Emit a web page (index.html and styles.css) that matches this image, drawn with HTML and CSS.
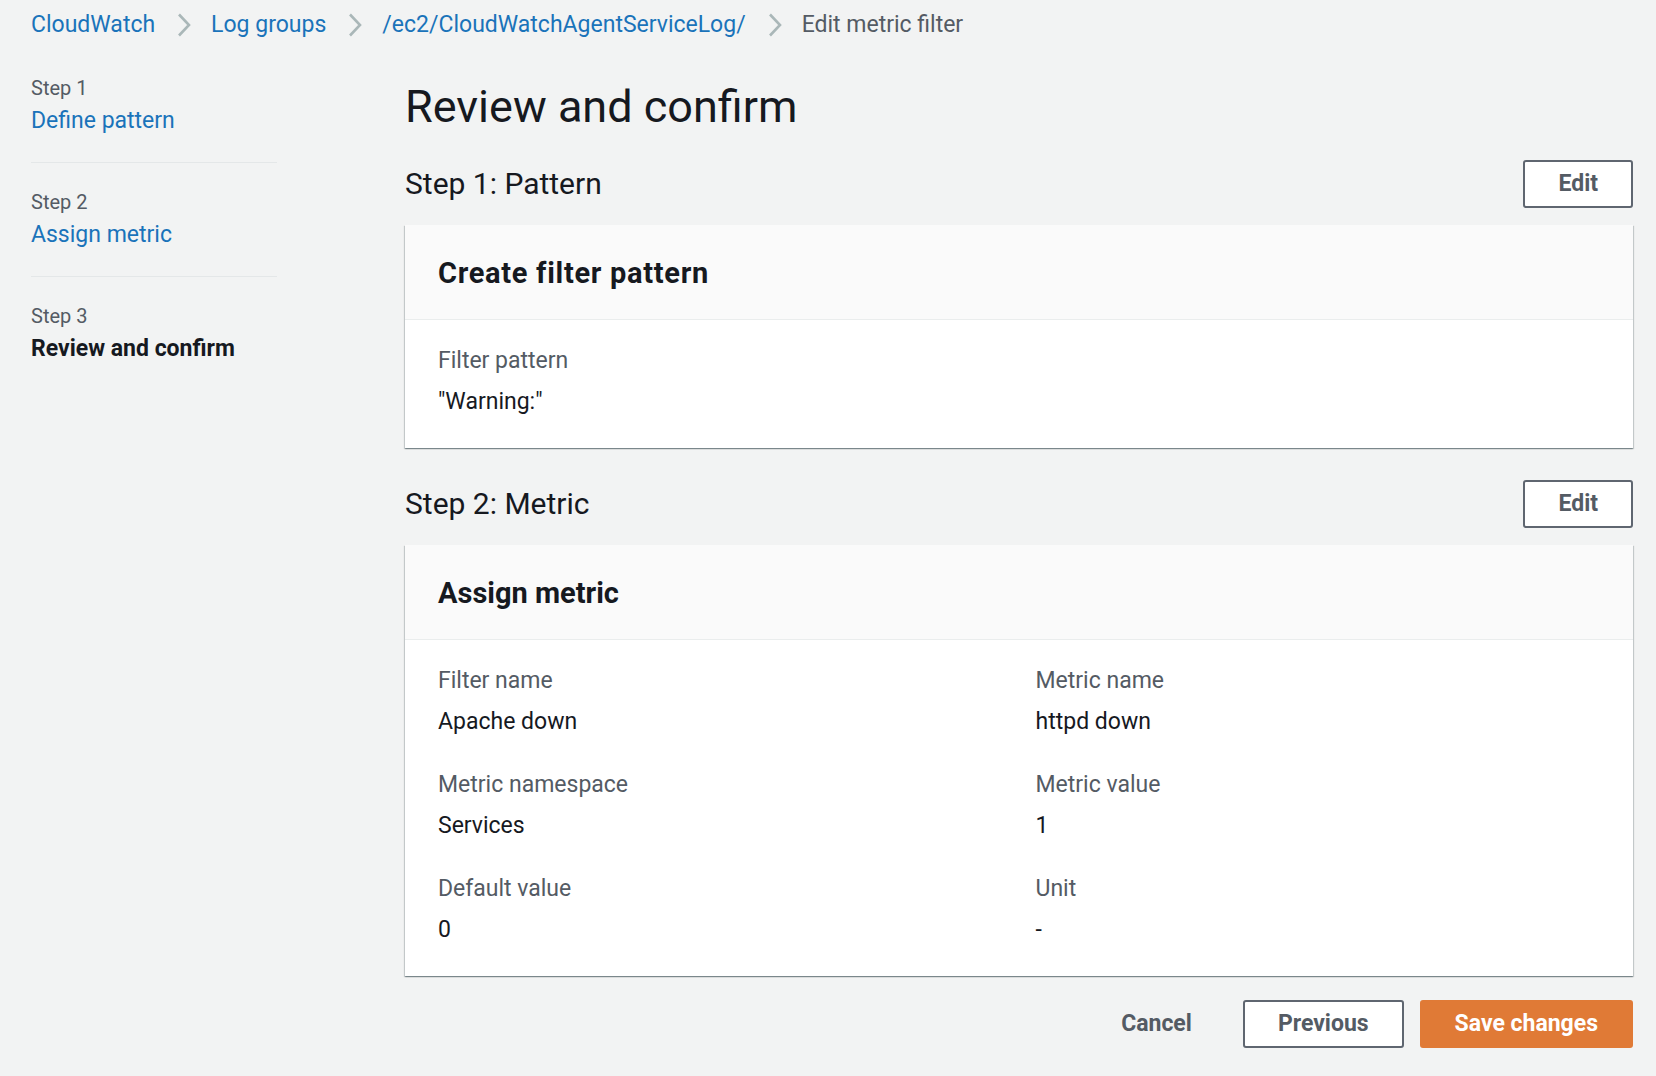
FILE: index.html
```html
<!DOCTYPE html>
<html lang="en">
<head>
<meta charset="utf-8">
<title>Edit metric filter</title>
<link rel="stylesheet" href="styles.css">
</head>
<body>
<nav class="breadcrumbs">
  <a class="crumb" href="#">CloudWatch</a>
  <svg class="chev" viewBox="0 0 14 24" width="14" height="24"><path d="M2 1.5 L12 12 L2 22.5" fill="none" stroke="#aab7b8" stroke-width="2.6"/></svg>
  <a class="crumb" href="#">Log groups</a>
  <svg class="chev" viewBox="0 0 14 24" width="14" height="24"><path d="M2 1.5 L12 12 L2 22.5" fill="none" stroke="#aab7b8" stroke-width="2.6"/></svg>
  <a class="crumb" href="#">/ec2/CloudWatchAgentServiceLog/</a>
  <svg class="chev" viewBox="0 0 14 24" width="14" height="24"><path d="M2 1.5 L12 12 L2 22.5" fill="none" stroke="#aab7b8" stroke-width="2.6"/></svg>
  <span class="crumb current">Edit metric filter</span>
</nav>

<div class="layout">
  <aside class="wizard-nav">
    <ol class="steps">
      <li class="step">
        <div class="step-label">Step 1</div>
        <a class="step-link" href="#">Define pattern</a>
      </li>
      <li class="step">
        <div class="step-label">Step 2</div>
        <a class="step-link" href="#">Assign metric</a>
      </li>
      <li class="step">
        <div class="step-label">Step 3</div>
        <span class="step-link active">Review and confirm</span>
      </li>
    </ol>
  </aside>

  <main class="content">
    <h1 class="page-title">Review and confirm</h1>

    <section class="review-section">
      <div class="section-head">
        <h2 class="section-title">Step 1: Pattern</h2>
        <button class="btn">Edit</button>
      </div>
      <div class="container">
        <div class="container-header">
          <h3 class="container-title wide">Create filter pattern</h3>
        </div>
        <div class="container-body">
          <div class="field">
            <div class="field-label">Filter pattern</div>
            <div class="field-value">"Warning:"</div>
          </div>
        </div>
      </div>
    </section>

    <section class="review-section second">
      <div class="section-head">
        <h2 class="section-title">Step 2: Metric</h2>
        <button class="btn">Edit</button>
      </div>
      <div class="container">
        <div class="container-header">
          <h3 class="container-title">Assign metric</h3>
        </div>
        <div class="container-body grid">
          <div class="field">
            <div class="field-label">Filter name</div>
            <div class="field-value">Apache down</div>
          </div>
          <div class="field">
            <div class="field-label">Metric name</div>
            <div class="field-value">httpd down</div>
          </div>
          <div class="field">
            <div class="field-label">Metric namespace</div>
            <div class="field-value">Services</div>
          </div>
          <div class="field">
            <div class="field-label">Metric value</div>
            <div class="field-value">1</div>
          </div>
          <div class="field">
            <div class="field-label">Default value</div>
            <div class="field-value">0</div>
          </div>
          <div class="field">
            <div class="field-label">Unit</div>
            <div class="field-value">-</div>
          </div>
        </div>
      </div>
    </section>

    <div class="actions">
      <button class="btn link">Cancel</button>
      <button class="btn">Previous</button>
      <button class="btn primary">Save changes</button>
    </div>
  </main>
</div>
</body>
</html>
```

FILE: styles.css
```css
* { box-sizing: border-box; }

body {
  margin: 0;
  background: #f2f3f3;
  color: #16191f;
  font-family: Roboto, "Noto Sans", Arial, sans-serif;
  font-size: 23px;
  line-height: 30px;
}

a { text-decoration: none; }

.breadcrumbs {
  display: flex;
  align-items: center;
  padding: 10px 0 0 31px;
  height: 40px;
}

.crumb {
  color: #1a73ba;
  font-size: 23px;
  line-height: 30px;
}

.crumb.current { color: #545b64; }

.chev {
  display: block;
  margin: 0 20px 0 22px;
}

.layout {
  display: flex;
  margin-top: 35px;
  padding: 0 23px 0 31px;
}

.wizard-nav {
  width: 246px;
  flex: none;
  margin-right: 128px;
}

.steps {
  list-style: none;
  margin: 0;
  padding: 0;
}

.step {
  padding-bottom: 26px;
  border-bottom: 1px solid #e4e7e8;
  margin-bottom: 26px;
}

.step:last-child {
  border-bottom: none;
}

.step-label {
  font-size: 20px;
  line-height: 26px;
  color: #545b64;
}

.step-link {
  display: block;
  margin-top: 5px;
  font-size: 23px;
  line-height: 30px;
  color: #1a73ba;
}

.step-link.active {
  color: #16191f;
  font-weight: 700;
}

.content {
  flex: 1;
  min-width: 0;
}

.page-title {
  margin: 4px 0 0;
  font-size: 45px;
  line-height: 56px;
  font-weight: 400;
  color: #16191f;
}

.review-section {
  margin-top: 25px;
}

.review-section.second {
  margin-top: 32px;
}

.section-head {
  display: flex;
  align-items: center;
  justify-content: space-between;
  height: 48px;
}

.section-title {
  margin: 0;
  font-size: 30px;
  line-height: 36px;
  font-weight: 400;
}

.btn {
  font-family: inherit;
  font-size: 23px;
  line-height: 30px;
  font-weight: 700;
  color: #545b64;
  background: #fff;
  border: 2px solid #5f6670;
  border-radius: 3px;
  padding: 7px 33px;
  height: 48px;
  cursor: pointer;
}

.btn.link {
  background: transparent;
  border-color: transparent;
}

.btn.primary {
  background: #e07a36;
  border-color: #e07a36;
  color: #fff;
}

.container {
  margin-top: 17px;
  background: #fff;
  box-shadow: 0 1px 1px 0 rgba(0, 28, 36, 0.3), 1px 1px 1px 0 rgba(0, 28, 36, 0.15), -1px 1px 1px 0 rgba(0, 28, 36, 0.15);
}

.container-header {
  background: #fafafa;
  border-bottom: 1px solid #eaeded;
  padding: 30px 33px 28px;
}

.container-title {
  margin: 0;
  font-size: 29px;
  line-height: 36px;
  font-weight: 700;
}

.container-title.wide {
  letter-spacing: 0.7px;
}

.container-body {
  padding: 26px 33px 31px;
}

.container-body.grid {
  display: grid;
  grid-template-columns: 1fr 1fr;
  column-gap: 33px;
  row-gap: 33px;
}

.field-label {
  color: #545b64;
}

.field-value {
  margin-top: 11px;
}

.actions {
  display: flex;
  justify-content: flex-end;
  gap: 16px;
  margin-top: 24px;
}
```
